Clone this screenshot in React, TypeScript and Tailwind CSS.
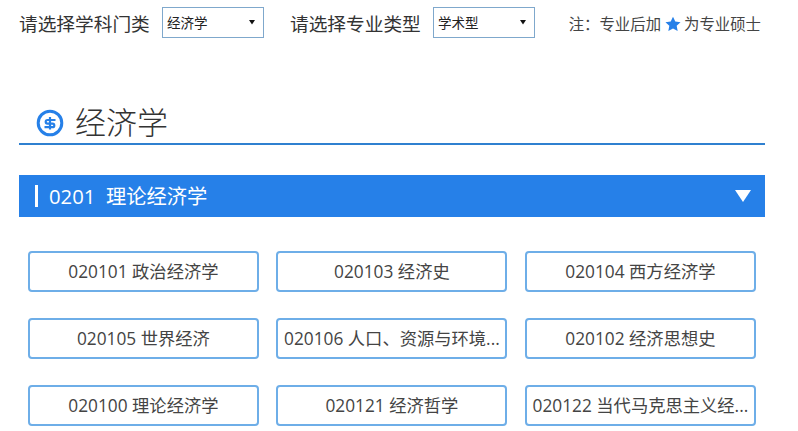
const font = { fontFamily: '"Open Sans", "Noto Sans CJK SC", sans-serif' };

const rows = [
  ["020101 政治经济学", "020103 经济史", "020104 西方经济学"],
  ["020105 世界经济", "020106 人口、资源与环境...", "020102 经济思想史"],
  ["020100 理论经济学", "020121 经济哲学", "020122 当代马克思主义经..."],
];

function Picker({ value }: { value: string }) {
  return (
    <div className="flex h-[31px] w-[102px] items-center justify-between border border-[#7fa8cc] bg-white pl-1 pr-[8px] text-[13.5px] text-[#222]">
      <span className="pt-[1px]">{value}</span>
      <svg width="6" height="6" viewBox="0 0 6 6" className="mb-0.5"><path d="M0 1h6L3 5.5z" fill="#111" /></svg>
    </div>
  );
}

export default function App() {
  return (
    <div className="h-[431px] w-[798px] overflow-hidden bg-white pl-[19px] pr-[33px] pt-[7px] text-[#333]" style={font}>
      <div className="flex h-[31px] items-center">
        <span className="mt-[3px] mr-[12px] w-[131px] whitespace-nowrap text-[18.700px] leading-none">请选择学科门类</span>
        <Picker value="经济学" />
        <span className="mt-[3px] ml-[26px] mr-[13px] w-[130px] whitespace-nowrap text-[18.700px] leading-none">请选择专业类型</span>
        <Picker value="学术型" />
        <div className="mt-[5px] ml-auto mr-[4px] flex items-center whitespace-nowrap text-[15.400px] leading-none text-[#444]">
          <span>注：专业后加</span>
          <svg width="16" height="16" viewBox="0 0 24 24" className="mx-[3.500px] mb-[3px]"><path d="M12 1l3.400 7.300 7.900 1-5.800 5.400 1.500 7.900L12 18.700l-7 3.900 1.500-7.900L.7 9.300l7.900-1z" fill="#2680e8" /></svg>
          <span>为专业硕士</span>
        </div>
      </div>

      <div className="mt-[69px] flex h-[38px] items-center border-b-2 border-[#2f80d0] pb-[5px] pl-[17px]">
        <svg width="28" height="28" viewBox="0 0 28 28" className="mr-[11px]" fill="none" stroke="#2680e8">
          <circle cx="14" cy="14" r="11.800" strokeWidth="3" />
          <path d="M19.500 11H11.500a1.800 1.800 0 0 0 0 3.600h5a1.800 1.800 0 0 1 0 3.600H8.500M14 8v12.500" strokeWidth="2.200" />
        </svg>
        <span className="text-[31px] leading-none font-light text-[#333]">经济学</span>
      </div>

      <div className="mt-[30px] flex h-[42px] items-center justify-between bg-[#2680e8] pl-[16px] pr-[14px] text-white">
        <div className="flex items-center text-[20.300px] leading-none">
          <span className="mr-[11px] h-[22px] w-[3px] bg-white" />
          <span className="whitespace-pre">0201  理论经济学</span>
        </div>
        <svg width="16" height="12" viewBox="0 0 16 12"><path d="M0 0h16L8 12z" fill="#fff" /></svg>
      </div>

      <div className="mt-[34px] flex flex-col gap-[26px] pl-[8.900px] pr-[9.100px]">
        {rows.map((row) => (
          <div key={row[0]} className="grid grid-cols-3 gap-x-[17.500px]">
            {row.map((label) => (
              <div key={label} className="h-[41px] whitespace-nowrap rounded border-2 border-[#6eaee8] bg-white text-center text-[17.300px] leading-[37px] text-[#444]">
                {label}
              </div>
            ))}
          </div>
        ))}
      </div>
    </div>
  );
}
